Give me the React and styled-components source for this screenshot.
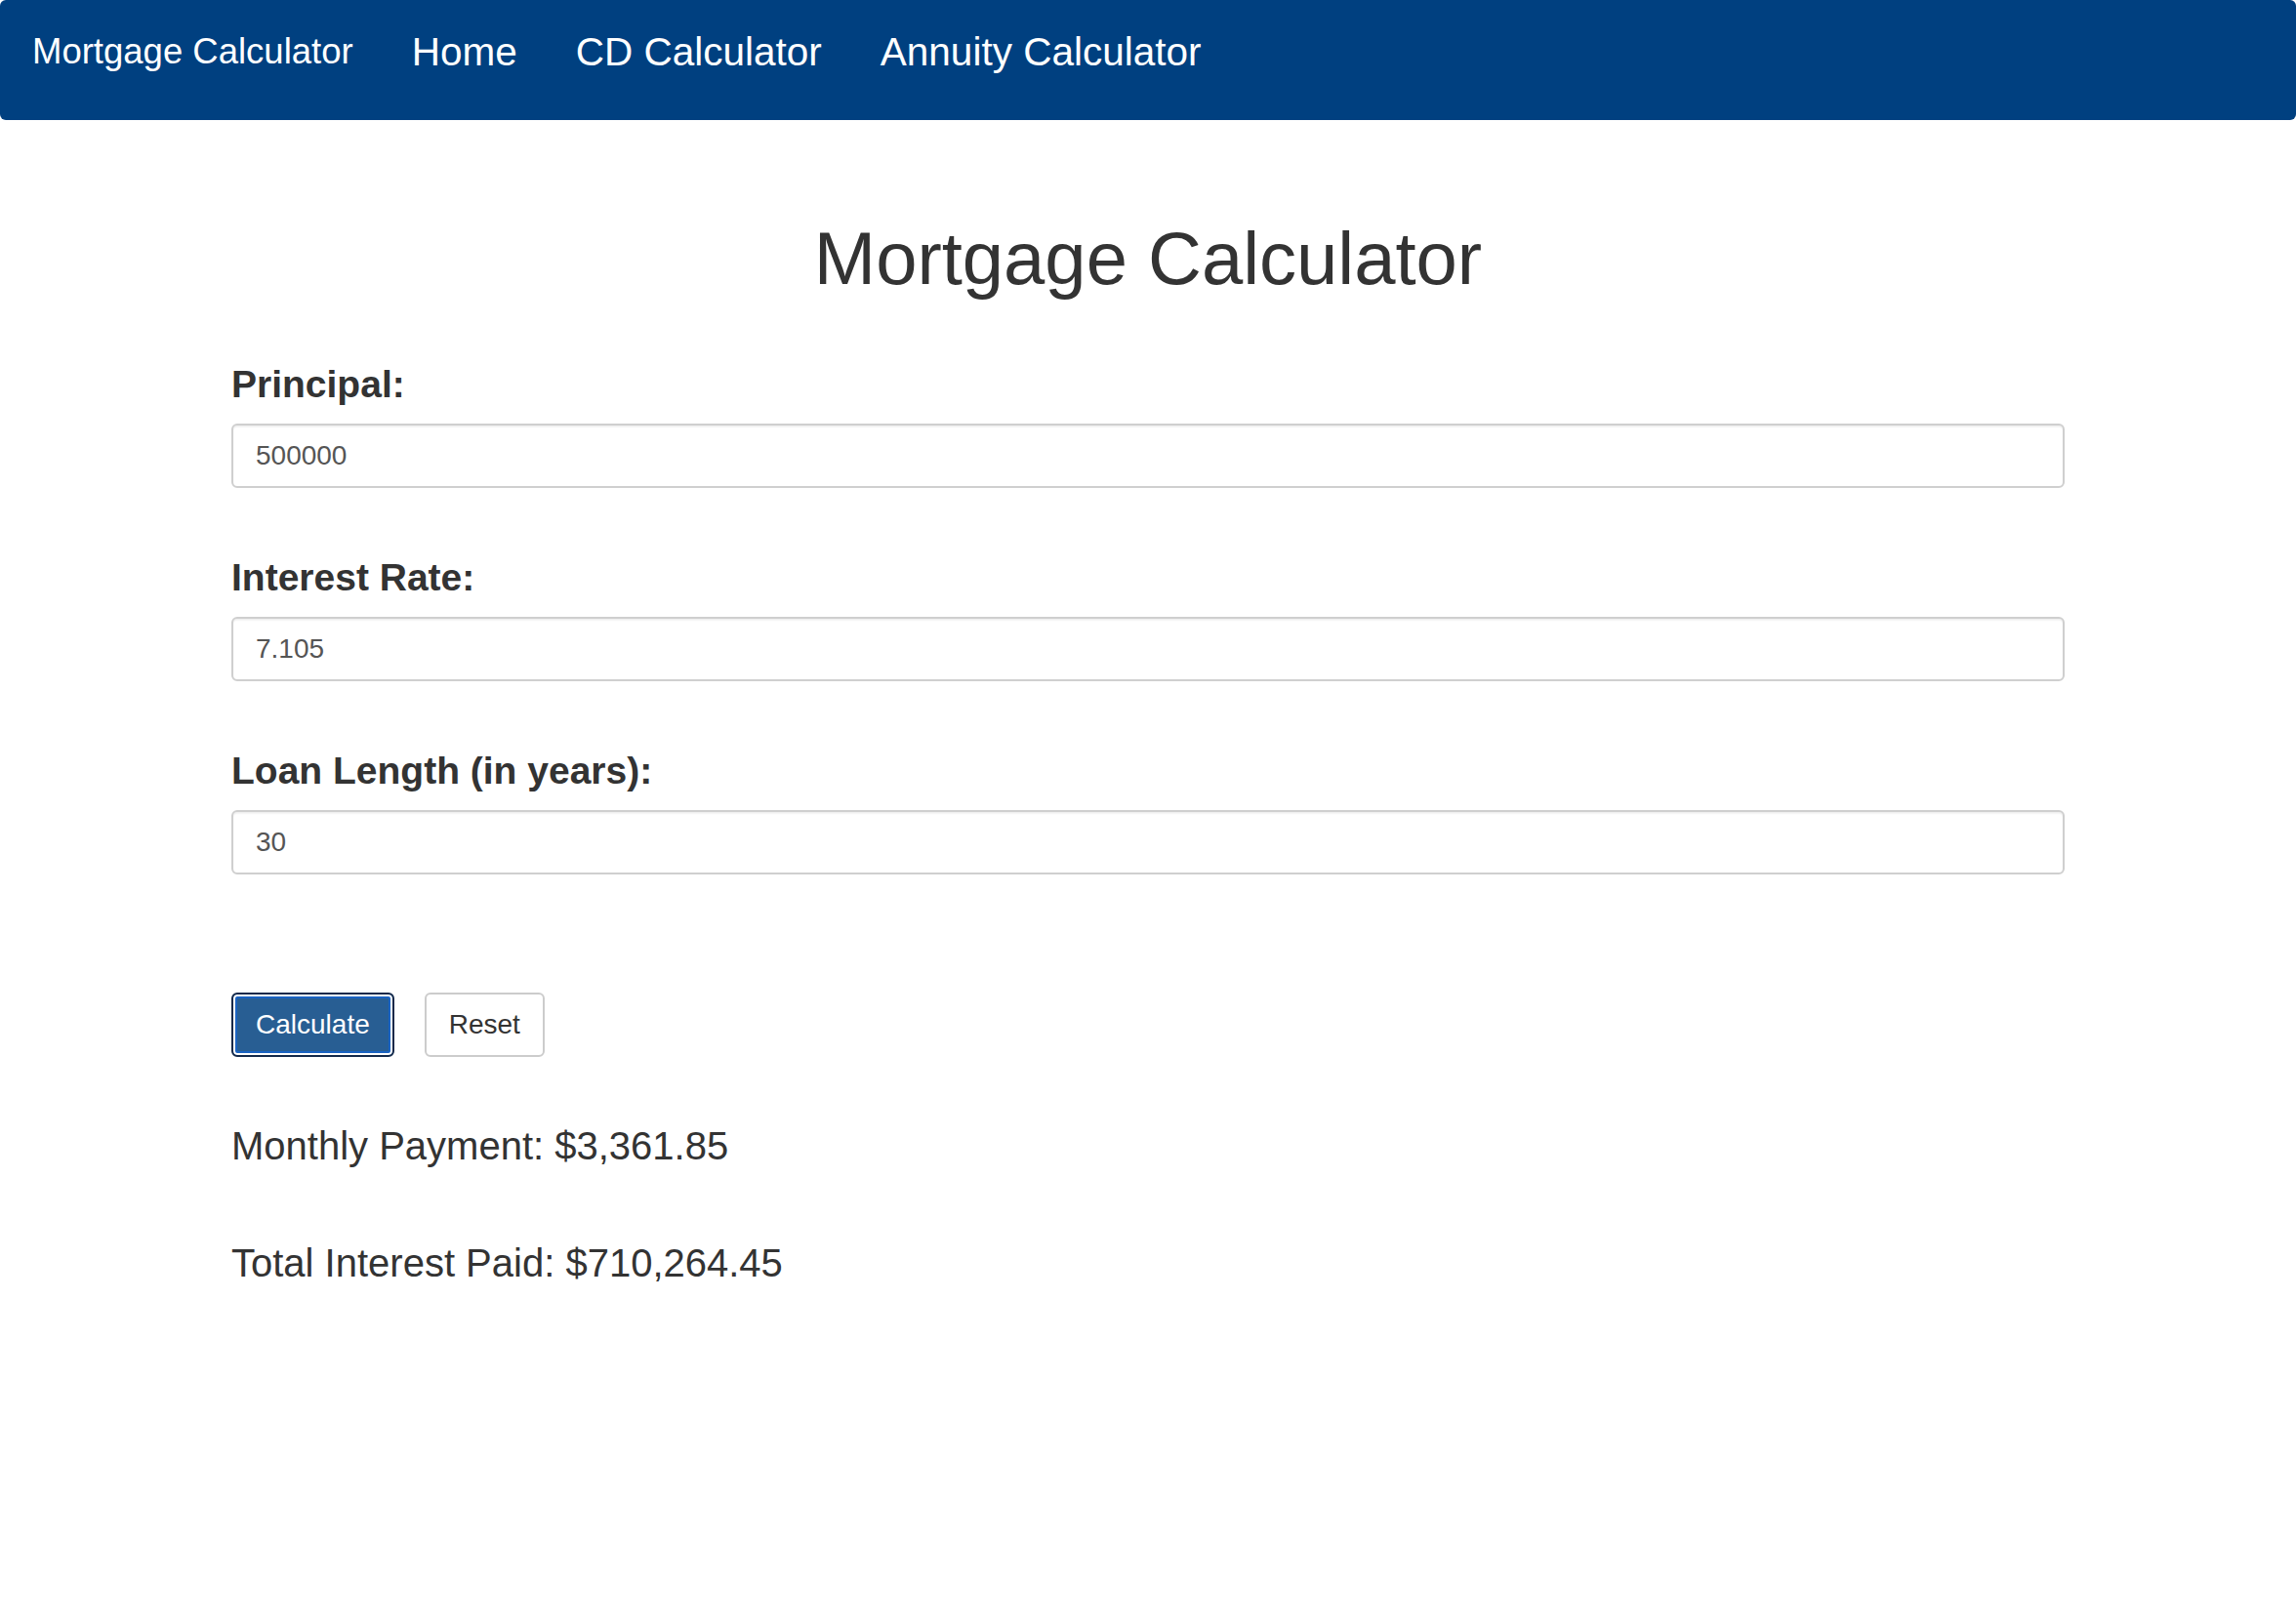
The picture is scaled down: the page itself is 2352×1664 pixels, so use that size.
import React, { useState } from 'react'
import styled, { createGlobalStyle } from 'styled-components'

const GlobalStyle = createGlobalStyle`
  body {
    margin: 0;
    background: #fff;
    font-family: "Liberation Sans", Arial, sans-serif;
    color: #333;
  }
`

const Navbar = styled.nav`
  display: flex;
  align-items: flex-start;
  gap: 60px;
  height: 123px;
  box-sizing: border-box;
  padding: 29px 0 0 33px;
  background-color: #004080;
  border-radius: 6px;
`

const NavItem = styled.a`
  font-size: ${props => (props.brand ? '36.5px' : '40.5px')};
  line-height: 48px;
  color: #fff;
  text-decoration: none;
  white-space: nowrap;
`

const Container = styled.main`
  width: 1878px;
  margin: 0 auto;
`

const Title = styled.h1`
  margin: 104px 0 0;
  font-size: 76px;
  line-height: 75px;
  font-weight: 400;
  text-align: center;
  color: #333;
`

const Field = styled.div`
  margin-top: 68px;
`

const Label = styled.label`
  display: block;
  font-size: 39px;
  line-height: 48px;
  font-weight: 700;
  color: #333;
`

const Input = styled.input`
  display: block;
  width: 100%;
  height: 66px;
  box-sizing: border-box;
  margin-top: 16px;
  padding: 0 23px;
  font-family: inherit;
  font-size: 28px;
  color: #555;
  border: 2px solid #cfcfcf;
  border-radius: 6px;
  box-shadow: inset 0 1.5px 1.5px rgba(0, 0, 0, 0.075);
  outline: none;
`

const ButtonRow = styled.div`
  display: flex;
  gap: 31px;
  margin-top: 121px;
`

const Button = styled.button`
  height: 66px;
  box-sizing: border-box;
  padding: 0 23px;
  font-family: inherit;
  font-size: 28px;
  border-radius: 6px;
  cursor: pointer;
  color: ${props => (props.primary ? '#fff' : '#333')};
  background-color: ${props => (props.primary ? '#285e93' : '#fff')};
  border: 2px solid ${props => (props.primary ? '#14294a' : '#cccccc')};
  box-shadow: ${props =>
    props.primary ? 'inset 0 0 0 2px #fff, inset 0 0 0 4px #1a63c2' : 'none'};
`

const Results = styled.div`
  display: flex;
  flex-direction: column;
  gap: 72px;
  margin-top: 67px;
`

const Result = styled.p`
  margin: 0;
  font-size: 40px;
  line-height: 48px;
  color: #333;
`

const fields = [
  { id: 'principal', label: 'Principal:', value: '500000' },
  { id: 'rate', label: 'Interest Rate:', value: '7.105' },
  { id: 'years', label: 'Loan Length (in years):', value: '30' },
]

function App() {
  const [values, setValues] = useState(
    fields.reduce((acc, f) => ({ ...acc, [f.id]: f.value }), {})
  )

  return (
    <>
      <GlobalStyle />
      <Navbar>
        <NavItem brand href="#">Mortgage Calculator</NavItem>
        <NavItem href="#">Home</NavItem>
        <NavItem href="#">CD Calculator</NavItem>
        <NavItem href="#">Annuity Calculator</NavItem>
      </Navbar>
      <Container>
        <Title>Mortgage Calculator</Title>
        {fields.map(f => (
          <Field key={f.id}>
            <Label htmlFor={f.id}>{f.label}</Label>
            <Input
              id={f.id}
              value={values[f.id]}
              onChange={e => setValues({ ...values, [f.id]: e.target.value })}
            />
          </Field>
        ))}
        <ButtonRow>
          <Button primary>Calculate</Button>
          <Button>Reset</Button>
        </ButtonRow>
        <Results>
          <Result>Monthly Payment: $3,361.85</Result>
          <Result>Total Interest Paid: $710,264.45</Result>
        </Results>
      </Container>
    </>
  )
}

export default App
